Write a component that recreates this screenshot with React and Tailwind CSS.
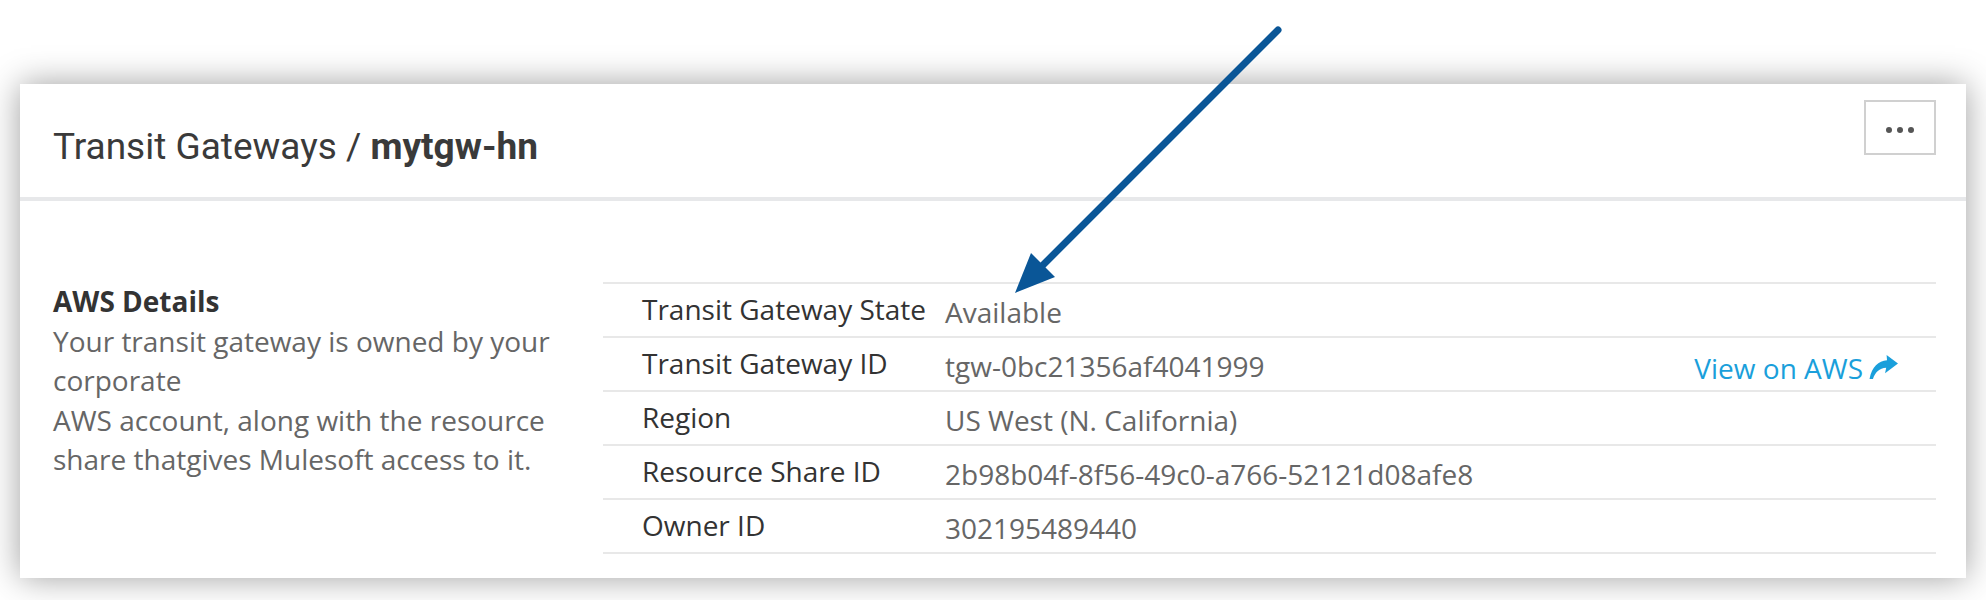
import React from "react";

const rows = [
  { label: "Transit Gateway State", value: "Available" },
  { label: "Transit Gateway ID", value: "tgw-0bc21356af4041999", link: true },
  { label: "Region", value: "US West (N. California)" },
  { label: "Resource Share ID", value: "2b98b04f-8f56-49c0-a766-52121d08afe8" },
  { label: "Owner ID", value: "302195489440" },
];

function ShareIcon() {
  return (
    <svg width="29" height="24" viewBox="0 0 28 23" className="ml-[6px] mt-[12px] shrink-0">
      <path
        d="M28 8 L17 0 L17.4 5 C9 5.6 3 11 0.5 23 L3.8 23 C6 16.5 10 12.6 16.6 12.2 L15.5 17.5 Z"
        fill="#1a9fdb"
      />
    </svg>
  );
}

export default function App() {
  return (
    <div className="relative w-[1986px] h-[600px] bg-white overflow-hidden" style={{ fontFamily: '"Open Sans", "Liberation Sans", sans-serif' }}>
      <div className="ml-[20px] mt-[84px] w-[1946px] bg-white shadow-[0_0_32px_rgba(0,0,0,0.38)]">
        <div className="h-[113px] flex items-start justify-between pl-[33px] pr-[30px]">
          <div
            className="mt-[39px] text-[37px] leading-[48px] text-[#3a3a3a] whitespace-nowrap"
            style={{ fontFamily: 'Roboto, "Liberation Sans", sans-serif' }}
          >
            Transit Gateways / <span className="font-bold">mytgw-hn</span>
          </div>
          <div className="mt-[16px] w-[72px] h-[55px] border-2 border-[#d0d0d0] flex items-center justify-center gap-[5px] pt-[5px]">
            <span className="w-[6px] h-[6px] rounded-full bg-[#555]" />
            <span className="w-[6px] h-[6px] rounded-full bg-[#555]" />
            <span className="w-[6px] h-[6px] rounded-full bg-[#555]" />
          </div>
        </div>
        <div className="h-[4px] bg-[#e7e8ea]" />
        <div className="flex pt-[81px] pb-[24px] pl-[33px] pr-[30px]">
          <div className="w-[550px] shrink-0 text-[28px] leading-[39.5px]">
            <div className="font-bold text-[#333]">AWS Details</div>
            <div className="text-[#666] pr-[20px]">
              Your transit gateway is owned by your corporate
              <br />
              AWS account, along with the resource share thatgives Mulesoft access to it.
            </div>
          </div>
          <div className="flex-1 border-t-2 border-[#e8e8e8] text-[28px]">
            {rows.map((r) => (
              <div key={r.label} className="flex h-[54px] border-b-2 border-[#e8e8e8] items-start">
                <div className="w-[342px] shrink-0 pl-[39px] leading-[50px] text-[#333] whitespace-nowrap">{r.label}</div>
                <div className="pt-[3px] leading-[50px] text-[#666] whitespace-nowrap">{r.value}</div>
                {r.link && (
                  <div className="ml-auto pr-[38px] pt-[5px] flex items-start text-[#1a9fdb] whitespace-nowrap">
                    <span className="leading-[50px]">View on AWS</span>
                    <ShareIcon />
                  </div>
                )}
              </div>
            ))}
          </div>
        </div>
      </div>
      <svg className="absolute left-0 top-0 pointer-events-none" width="1986" height="600">
        <line x1="1278" y1="30" x2="1043" y2="265" stroke="#0a5697" strokeWidth="7" strokeLinecap="round" />
        <polygon points="1015,293 1031,253 1055,277" fill="#0a5697" />
      </svg>
    </div>
  );
}
